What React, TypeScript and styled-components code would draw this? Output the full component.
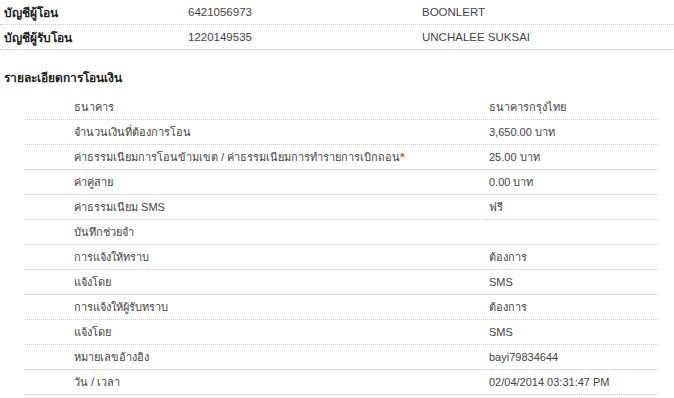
import React from "react";
import styled, { createGlobalStyle } from "styled-components";

const Global = createGlobalStyle`
  html, body { margin: 0; padding: 0; background: #fff; }
  body { font-family: "Liberation Sans", Tahoma, "Noto Sans", sans-serif; color: #333; }
`;

const Page = styled.div`
  width: 674px;
  display: flex;
  flex-direction: column;
`;

const AccountRow = styled.div`
  display: grid;
  grid-template-columns: 188px 234px 1fr;
  height: 24px;
  align-items: center;
  border-bottom: 1px dotted #c8c8c8;
  font-size: 11.5px;
`;

const AccountLabel = styled.div`
  padding-left: 4px;
  font-weight: bold;
  font-size: 12px;
  color: #222;
`;

const AccountValue = styled.div`
  color: #444;
`;

const SectionTitle = styled.div`
  padding-left: 4px;
  height: 36px;
  display: flex;
  align-items: center;
  margin-top: 9px;
  font-weight: bold;
  font-size: 12px;
  color: #222;
`;

const DetailList = styled.div`
  margin-left: 25px;
  width: 633px;
  display: flex;
  flex-direction: column;
`;

const DetailRow = styled.div`
  display: grid;
  grid-template-columns: 464px 1fr;
  height: 24px;
  align-items: center;
  border-bottom: 1px dotted #c8c8c8;
  font-size: 11px;
  color: #444;
`;

const DetailLabel = styled.div`
  padding-left: 49px;
  white-space: nowrap;
`;

const Required = styled.span`
  color: #ff3b3b;
  font-weight: bold;
`;

const details: { label: React.ReactNode; value: string }[] = [
  { label: "ธนาคาร", value: "ธนาคารกรุงไทย" },
  { label: "จำนวนเงินที่ต้องการโอน", value: "3,650.00 บาท" },
  {
    label: (
      <>
        ค่าธรรมเนียมการโอนข้ามเขต / ค่าธรรมเนียมการทำรายการเบิกถอน<Required>*</Required>
      </>
    ),
    value: "25.00 บาท",
  },
  { label: "ค่าคู่สาย", value: "0.00 บาท" },
  { label: "ค่าธรรมเนียม SMS", value: "ฟรี" },
  { label: "บันทึกช่วยจำ", value: "" },
  { label: "การแจ้งให้ทราบ", value: "ต้องการ" },
  { label: "แจ้งโดย", value: "SMS" },
  { label: "การแจ้งให้ผู้รับทราบ", value: "ต้องการ" },
  { label: "แจ้งโดย", value: "SMS" },
  { label: "หมายเลขอ้างอิง", value: "bayi79834644" },
  { label: "วัน / เวลา", value: "02/04/2014 03:31:47 PM" },
];

export default function App() {
  return (
    <Page>
      <Global />
      <AccountRow>
        <AccountLabel>บัญชีผู้โอน</AccountLabel>
        <AccountValue>6421056973</AccountValue>
        <AccountValue>BOONLERT</AccountValue>
      </AccountRow>
      <AccountRow>
        <AccountLabel>บัญชีผู้รับโอน</AccountLabel>
        <AccountValue>1220149535</AccountValue>
        <AccountValue>UNCHALEE SUKSAI</AccountValue>
      </AccountRow>
      <SectionTitle>รายละเอียดการโอนเงิน</SectionTitle>
      <DetailList>
        {details.map((d, i) => (
          <DetailRow key={i}>
            <DetailLabel>{d.label}</DetailLabel>
            <div>{d.value}</div>
          </DetailRow>
        ))}
      </DetailList>
    </Page>
  );
}
